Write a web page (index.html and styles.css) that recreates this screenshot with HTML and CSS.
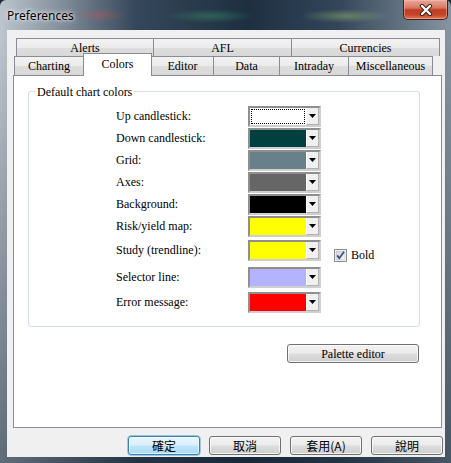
FILE: index.html
```html
<!DOCTYPE html>
<html>
<head>
<meta charset="utf-8">
<title>Preferences</title>
<link rel="stylesheet" href="styles.css">
</head>
<body>
<div class="window">
  <div class="titlebar">
    <span class="title">Preferences</span>
    <div class="close">
      <svg width="14" height="12" viewBox="0 0 14 12">
        <path d="M3 2 L11 10 M11 2 L3 10" stroke="#3a1d18" stroke-width="4.2" stroke-linecap="round"/>
        <path d="M3 2 L11 10 M11 2 L3 10" stroke="#ffffff" stroke-width="2.4" stroke-linecap="round"/>
      </svg>
    </div>
  </div>
  <div class="client">
    <div class="tabs">
      <div class="tabrow back">
        <div class="tab t-alerts">Alerts</div>
        <div class="tab t-afl">AFL</div>
        <div class="tab t-curr">Currencies</div>
      </div>
      <div class="tabrow front">
        <div class="tab t-chart">Charting</div>
        <div class="tab t-colors selected">Colors</div>
        <div class="tab t-editor">Editor</div>
        <div class="tab t-data">Data</div>
        <div class="tab t-intra">Intraday</div>
        <div class="tab t-misc">Miscellaneous</div>
      </div>
      <div class="panel">
        <div class="group">
          <div class="legend">Default chart colors</div>
          <div class="rows">
            <div class="row"><span class="label">Up candlestick:</span><span class="combo"><span class="swatch focus c-up"></span><span class="drop"><svg width="7" height="4" viewBox="0 0 7 4"><path d="M0 0 H7 L3.5 4 Z" fill="#000"/></svg></span></span></div>
            <div class="row"><span class="label">Down candlestick:</span><span class="combo"><span class="swatch c-down"></span><span class="drop"><svg width="7" height="4" viewBox="0 0 7 4"><path d="M0 0 H7 L3.5 4 Z" fill="#000"/></svg></span></span></div>
            <div class="row"><span class="label">Grid:</span><span class="combo"><span class="swatch c-grid"></span><span class="drop"><svg width="7" height="4" viewBox="0 0 7 4"><path d="M0 0 H7 L3.5 4 Z" fill="#000"/></svg></span></span></div>
            <div class="row"><span class="label">Axes:</span><span class="combo"><span class="swatch c-axes"></span><span class="drop"><svg width="7" height="4" viewBox="0 0 7 4"><path d="M0 0 H7 L3.5 4 Z" fill="#000"/></svg></span></span></div>
            <div class="row"><span class="label">Background:</span><span class="combo"><span class="swatch c-bg"></span><span class="drop"><svg width="7" height="4" viewBox="0 0 7 4"><path d="M0 0 H7 L3.5 4 Z" fill="#000"/></svg></span></span></div>
            <div class="row"><span class="label">Risk/yield map:</span><span class="combo"><span class="swatch c-yellow"></span><span class="drop"><svg width="7" height="4" viewBox="0 0 7 4"><path d="M0 0 H7 L3.5 4 Z" fill="#000"/></svg></span></span></div>
            <div class="row gap3"><span class="label">Study (trendline):</span><span class="combo"><span class="swatch c-yellow"></span><span class="drop"><svg width="7" height="4" viewBox="0 0 7 4"><path d="M0 0 H7 L3.5 4 Z" fill="#000"/></svg></span></span>
              <span class="check">
                <svg class="cbox" width="13" height="13" viewBox="0 0 13 13">
                  <defs><linearGradient id="cg" x1="0" y1="0" x2="1" y2="1"><stop offset="0" stop-color="#d2d4d8"/><stop offset="1" stop-color="#fbfbfb"/></linearGradient></defs>
                  <rect x="0.5" y="0.5" width="12" height="12" fill="#fff" stroke="#8f8f8f"/>
                  <rect x="2" y="2" width="9" height="9" fill="url(#cg)" stroke="#b5b8bd" stroke-width="0.6"/>
                  <path d="M3.2 6.4 L5.3 9.3 L10 2.8" fill="none" stroke="#3a4f8f" stroke-width="1.8"/>
                </svg>
                <span class="bold-label">Bold</span>
              </span>
            </div>
            <div class="row gap6"><span class="label">Selector line:</span><span class="combo"><span class="swatch c-sel"></span><span class="drop"><svg width="7" height="4" viewBox="0 0 7 4"><path d="M0 0 H7 L3.5 4 Z" fill="#000"/></svg></span></span></div>
            <div class="row gap4"><span class="label">Error message:</span><span class="combo"><span class="swatch c-err"></span><span class="drop"><svg width="7" height="4" viewBox="0 0 7 4"><path d="M0 0 H7 L3.5 4 Z" fill="#000"/></svg></span></span></div>
          </div>
        </div>
        <div class="palette-row"><button class="btn palette">Palette editor</button></div>
      </div>
    </div>
    <div class="buttons">
      <button class="btn cjk default">確定</button>
      <button class="btn cjk">取消</button>
      <button class="btn cjk">套用(A)</button>
      <button class="btn cjk">說明</button>
    </div>
  </div>
</div>
</body>
</html>
```
FILE: styles.css
```css
html, body {
  margin: 0;
  padding: 0;
  background: #1c2b39;
}

.window {
  width: 451px;
  height: 463px;
  box-sizing: border-box;
  padding: 0 6px 6px 7px;
  overflow: hidden;
  border-radius: 6px 6px 0 0;
  background:
    radial-gradient(ellipse 28px 7px at 100px 15px, rgba(200, 80, 80, 0.35), rgba(200, 80, 80, 0) 100%),
    radial-gradient(ellipse 45px 7px at 210px 16px, rgba(60, 160, 110, 0.4), rgba(60, 160, 110, 0) 100%),
    radial-gradient(ellipse 45px 7px at 345px 16px, rgba(170, 200, 110, 0.4), rgba(170, 200, 110, 0) 100%),
    linear-gradient(to bottom, rgba(0, 0, 0, 0) 0, rgba(0, 0, 0, 0) 40px, rgba(20, 35, 50, 0.55) 100%),
    linear-gradient(to right, #bcc5cd 0, #8995a1 12%, #35475a 30%, #1d2f40 55%, #33465a 75%, #6c7b89 92%, #8795a2 100%);
}

.titlebar {
  height: 30px;
  display: flex;
  align-items: flex-start;
}

.title {
  font-family: "Noto Sans", "Open Sans", sans-serif;
  font-size: 12px;
  line-height: 16px;
  margin-top: 8px;
  color: #000;
  text-shadow: 0 0 6px rgba(255, 255, 255, 0.9), 0 0 3px rgba(255, 255, 255, 0.9);
}

.close {
  margin-left: auto;
  margin-right: -3px;
  width: 45px;
  height: 20px;
  box-sizing: border-box;
  border: 1px solid #4a1f17;
  border-top: none;
  border-radius: 0 0 5px 5px;
  background: linear-gradient(to bottom, #e9a898 0%, #d67762 42%, #c23b20 52%, #c5462b 78%, #de7b5d 100%);
  box-shadow: inset 0 0 0 1px rgba(255, 200, 180, 0.45);
  display: flex;
  align-items: center;
  justify-content: center;
}

.client {
  width: 438px;
  height: 427px;
  box-sizing: border-box;
  background: #f0f0f0;
  padding-top: 8px;
}

.tabs {
  margin-left: 6px;
  width: 429px;
}

.tabrow {
  display: flex;
}

.tabrow.back {
  margin-left: 3px;
  height: 18px;
}

.tabrow.front {
  margin-left: 1px;
  height: 19px;
}

.serif,
.tab,
.legend,
.label,
.bold-label,
.palette {
  font-family: "Liberation Serif", "Tinos", "DejaVu Serif", serif;
}

.tab {
  box-sizing: border-box;
  margin-right: -1px;
  border: 1px solid #898c95;
  border-bottom: none;
  background: linear-gradient(to bottom, #f3f3f3 0%, #ebebeb 50%, #dddddd 51%, #d8d8d8 100%);
  font-size: 12px;
  color: #000;
  display: flex;
  align-items: center;
  justify-content: center;
  padding-top: 1px;
}

.back .tab { height: 18px; }
.front .tab { height: 19px; }

.tab.selected {
  position: relative;
  z-index: 2;
  height: 23px;
  margin-top: -3px;
  margin-bottom: -1px;
  background: #fff;
  align-items: flex-start;
  padding-top: 3px;
}

.t-alerts { width: 138px; }
.t-afl { width: 139px; }
.t-curr { width: 149px; }
.t-chart { width: 70px; }
.t-colors { width: 69px; }
.t-editor { width: 63px; }
.t-data { width: 67px; }
.t-intra { width: 70px; }
.t-misc { width: 85px; }

.panel {
  position: relative;
  z-index: 1;
  height: 353px;
  box-sizing: border-box;
  border: 1px solid #898c95;
  background: #fff;
  padding-top: 15px;
}

.group {
  margin-left: 14px;
  width: 392px;
  box-sizing: border-box;
  border: 1px solid #d5dfe5;
  border-radius: 3px;
  padding-bottom: 13px;
}

.legend {
  width: fit-content;
  margin: -7px 0 0 6px;
  padding: 0 2px;
  background: #fff;
  font-size: 12px;
  line-height: 14px;
  color: #000;
}

.rows {
  margin-top: 7px;
  padding-left: 87px;
  display: flex;
  flex-direction: column;
  gap: 1px;
}

.row {
  display: flex;
  align-items: flex-start;
  height: 21px;
}

.row.gap3 { margin-top: 2px; }
.row.gap6 { margin-top: 5px; }
.row.gap4 { margin-top: 3px; }

.label {
  width: 132px;
  height: 21px;
  line-height: 20px;
  font-size: 12px;
  color: #000;
  white-space: nowrap;
}

.combo {
  width: 73px;
  height: 21px;
  box-sizing: border-box;
  border: 2px solid;
  border-color: #8f8f8f #cfcfcf #cfcfcf #8f8f8f;
  display: flex;
}

.swatch {
  flex: 1;
  height: 100%;
}

.swatch.focus {
  outline: 1px dotted #000;
  outline-offset: -2px;
}

.c-up { background: #ffffff; }
.c-down { background: #004040; }
.c-grid { background: #688089; }
.c-axes { background: #666666; }
.c-bg { background: #000000; }
.c-yellow { background: #ffff00; }
.c-sel { background: #b3b3ff; }
.c-err { background: #ff0000; }

.drop {
  width: 13px;
  height: 100%;
  box-sizing: border-box;
  background: #f0f0f0;
  border-left: 1px solid #ffffff;
  border-right: 1px solid #b0b0b0;
  border-bottom: 1px solid #b0b0b0;
  display: flex;
  align-items: center;
  justify-content: center;
}

.check {
  display: flex;
  align-items: center;
  margin-left: 13px;
  margin-top: 9px;
}

.cbox {
  display: block;
}

.bold-label {
  margin-left: 4px;
  font-size: 12px;
  line-height: 13px;
  color: #000;
}

.palette-row {
  display: flex;
  justify-content: flex-end;
  padding-right: 22px;
  margin-top: 17px;
}

.btn {
  margin: 0;
  padding: 0;
  height: 19px;
  box-sizing: border-box;
  border: 1px solid #707070;
  border-radius: 3px;
  background: linear-gradient(to bottom, #f2f2f2 0%, #ebebeb 48%, #dddddd 52%, #cfcfcf 100%);
  box-shadow: inset 0 0 0 1px rgba(255, 255, 255, 0.7);
  color: #000;
}

.palette {
  width: 132px;
  font-size: 12px;
  line-height: 16px;
}

.buttons {
  display: flex;
  justify-content: flex-end;
  gap: 9px;
  padding-right: 2px;
  margin-top: 8px;
}

.cjk {
  width: 72px;
  font-family: "Noto Sans CJK TC", "Noto Sans CJK SC", sans-serif;
  font-size: 12px;
  line-height: 16px;
  font-weight: normal;
}

.btn.default {
  border-color: #3c7fb1;
  background: linear-gradient(to bottom, #eaf6fd 0%, #d9f0fc 48%, #bee6fd 52%, #a7d9f5 100%);
  box-shadow: inset 0 0 0 1px rgba(255, 255, 255, 0.6), 0 0 0 0.5px #48a0d8;
}
```
